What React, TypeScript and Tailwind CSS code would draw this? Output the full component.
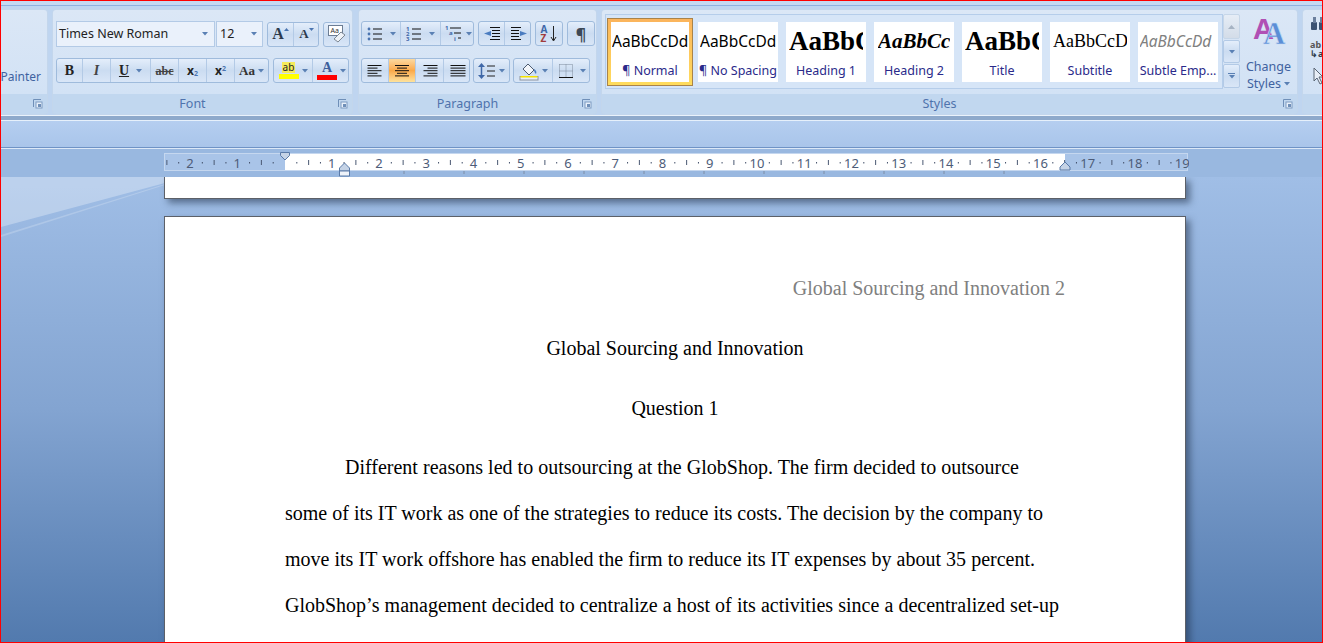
import type { ReactNode } from "react";

const ui = "font-['Noto_Sans',sans-serif]";
const serif = "font-['Liberation_Serif',serif]";
const btnBg = "bg-gradient-to-b from-[#e4eefb] via-[#cbdcf1] to-[#d9e6f7]";

function Caret({ color = "#5a80b4" }: { color?: string }) {
  return (
    <svg width="6" height="4" viewBox="0 0 6 4" className="shrink-0">
      <path d="M0 0h6L3 3.5z" fill={color} />
    </svg>
  );
}

function Launcher() {
  return (
    <svg width="10" height="10" viewBox="0 0 10 10" className="absolute right-[4px] bottom-[5px]">
      <path d="M.5 8V.5H8" fill="none" stroke="#6f8fb8" />
      <rect x="3" y="3" width="6" height="6" fill="#e8f0fa" stroke="#7f9cc2" />
      <rect x="5" y="5" width="3" height="3" fill="#6f8fb8" />
    </svg>
  );
}

function Group({ width, label, launcher = true, children }: { width?: string; label?: string; launcher?: boolean; children: ReactNode }) {
  return (
    <div className={`relative flex h-[106px] shrink-0 flex-col overflow-hidden rounded-[4px] border border-[#c3d6ec] ${width}`}>
      <div className="h-[84px] shrink-0 bg-gradient-to-b from-[#dbe7f6] to-[#d2e2f5]">{children}</div>
      <div className={`flex h-[20px] shrink-0 items-center justify-center bg-[#c1d7ef] pt-[1px] pr-[20px] text-[12.5px] text-[#4f73ad] ${ui}`}>{label}</div>
      {launcher ? <Launcher /> : null}
    </div>
  );
}

function Bar({ children, className = "" }: { children: ReactNode; className?: string }) {
  return (
    <div className={`flex h-[25px] shrink-0 divide-x divide-[#b3cae6] overflow-hidden rounded-[3px] border border-[#9fbbdc] ${btnBg} ${className}`}>
      {children}
    </div>
  );
}

function Seg({ w, active, children }: { w: string; active?: boolean; children: ReactNode }) {
  return (
    <div
      className={`flex h-full shrink-0 items-center justify-center gap-[3px] ${w} ${
        active ? "bg-gradient-to-b from-[#fbd9a0] via-[#fba948] to-[#fde29c]" : ""
      }`}
    >
      {children}
    </div>
  );
}

function Lines({ kind }: { kind: "left" | "center" | "right" | "justify" }) {
  const rows = [14, 10, 14, 10, 14];
  return (
    <svg width="16" height="14" viewBox="0 0 16 14">
      {rows.map((n, i) => {
        const len = kind === "justify" ? 15 : n;
        const x = kind === "left" || kind === "justify" ? 0.5 : kind === "right" ? 15.5 - len : 8 - len / 2;
        return <path key={i} d={`M${x} ${1.5 + i * 2.6}h${len}`} stroke="#111" strokeWidth="1" />;
      })}
    </svg>
  );
}

function Bullets() {
  return (
    <svg width="16" height="14" viewBox="0 0 16 14">
      {[2, 7, 12].map((y) => (
        <g key={y}>
          <circle cx="2" cy={y} r="1.4" fill="#4a74b0" />
          <path d={`M6 ${y}h9`} stroke="#111" />
        </g>
      ))}
    </svg>
  );
}

function Numbered() {
  return (
    <svg width="16" height="14" viewBox="0 0 16 14">
      {[2, 7, 12].map((y, i) => (
        <g key={y}>
          <text x="0" y={y + 2} fontSize="6" fontWeight="700" fill="#3f68a8" fontFamily="Noto Sans, sans-serif">{i + 1}</text>
          <path d={`M6 ${y}h9`} stroke="#111" />
        </g>
      ))}
    </svg>
  );
}

function Multi() {
  return (
    <svg width="18" height="17" viewBox="0 0 18 17">
      <text x="0" y="5" fontSize="6" fontWeight="700" fill="#3f68a8" fontFamily="Noto Sans, sans-serif">1</text>
      <path d="M5 3h11" stroke="#111" />
      <text x="4" y="10" fontSize="6" fontWeight="700" fill="#3f68a8" fontFamily="Noto Sans, sans-serif">a</text>
      <path d="M9 8h7" stroke="#111" />
      <text x="9" y="16" fontSize="6" fontWeight="700" fill="#3f68a8" fontFamily="Noto Sans, sans-serif">i</text>
      <path d="M13 13h3" stroke="#111" />
    </svg>
  );
}

function Indent({ flip }: { flip?: boolean }) {
  return (
    <svg width="18" height="16" viewBox="0 0 18 16" className={flip ? "-scale-x-100" : ""}>
      <path d="M7 1.5h10M9 4.5h8M9 7.5h8M9 10.5h8M7 13.5h10" stroke="#111" />
      <path d="M8 5v5L1 7.5z" fill="#4a7cc0" />
    </svg>
  );
}

function LineSpacing() {
  return (
    <svg width="18" height="16" viewBox="0 0 18 16">
      <path d="M3.5 3v10" stroke="#3f68a8" strokeWidth="1.5" />
      <path d="M3.5 0L7 4H0zM3.5 16L7 12H0z" fill="#3f68a8" />
      <path d="M9 3h8M9 8h8M9 13h8" stroke="#222" />
    </svg>
  );
}

function Bucket() {
  return (
    <svg width="20" height="20" viewBox="0 0 20 20">
      <path d="M4 8l5-5 6 6-5 5z" fill="#f3f6fb" stroke="#4d5b70" />
      <path d="M15 8c2 1 3 3 2 5-1-1-2-2-2-5z" fill="#4a7cc0" />
      <rect x="1" y="15.5" width="18" height="3.5" fill="#e8eef6" stroke="#8d949e" />
      <rect x="1.5" y="15" width="17" height="1.5" fill="#f5e300" />
    </svg>
  );
}

function Borders() {
  return (
    <svg width="14" height="14" viewBox="0 0 14 14">
      <path d="M.5.5h13v13M.5.5v13M7 .5v13M.5 7h13" stroke="#7d8a9c" strokeDasharray="1 1" fill="none" />
      <path d="M0 13.5h14" stroke="#111" />
    </svg>
  );
}

function Clear() {
  return (
    <svg width="20" height="20" viewBox="0 0 20 20">
      <rect x="1.5" y="1.5" width="14" height="10" fill="#fff" stroke="#6c7d94" />
      <text x="3.5" y="9" fontSize="7" fill="#333" fontFamily="Noto Sans, sans-serif">Aa</text>
      <path d="M7 15l7-7 4 3-7 7z" fill="#eef2f7" stroke="#7d8793" />
    </svg>
  );
}

const styleItems = [
  { name: "¶ Normal", cls: `text-[15.5px] text-black ${ui}`, w: "w-[76px]" },
  { name: "¶ No Spacing", cls: `text-[15.5px] text-black ${ui}`, w: "w-[76px]" },
  { name: "Heading 1", cls: `text-[27px] font-bold text-black ${serif}`, w: "w-[74px]" },
  { name: "Heading 2", cls: `text-[21px] font-bold italic text-black ${serif}`, w: "w-[72px]" },
  { name: "Title", cls: `text-[27px] font-bold text-black ${serif}`, w: "w-[74px]" },
  { name: "Subtitle", cls: `text-[18px] text-black ${serif}`, w: "w-[74px]" },
  { name: "Subtle Emp...", cls: `text-[15.5px] italic text-[#808080] ${ui}`, w: "w-[76px]" },
];

function StyleCard({ item, first }: { item: (typeof styleItems)[number]; first: boolean }) {
  return (
    <div className={first ? "-my-[4px] -mr-[3px] shrink-0 border border-[#a9834a] bg-gradient-to-b from-[#fbb45c] to-[#ffdc5c] p-[3px]" : "shrink-0"}>
      <div className={`flex h-[60px] flex-col items-center bg-white ${first ? "w-[78px]" : "w-[80px]"}`}>
        <div className={`flex h-[40px] items-center overflow-hidden whitespace-nowrap ${item.w} ${item.cls}`}>AaBbCcDd</div>
        <div className={`text-[12.5px] leading-[18px] whitespace-nowrap text-[#2a2a8a] ${ui}`}>{item.name}</div>
      </div>
    </div>
  );
}

function ChangeStylesIcon() {
  return (
    <svg width="34" height="32" viewBox="0 0 34 32">
      <text x="1" y="25" fontSize="29" fontWeight="700" fill="#b04fb4" fontFamily="Liberation Sans, sans-serif">A</text>
      <text x="11" y="30" fontSize="31" fontWeight="700" fill="#5b8ed6" stroke="#c8dcf4" strokeWidth="0.6" fontFamily="Liberation Serif, serif">A</text>
    </svg>
  );
}

function Ruler() {
  const z = 121; // ruler zero, relative to the svg
  const unit = 47.25;
  const ticks = [];
  const numbers = [];
  for (let n = -3; n <= 18; n++) {
    const x = z + n * unit;
    ticks.push(<path key={`a${n}`} d={`M${x + unit / 4} 13v1.5`} stroke="#3f4c66" />);
    ticks.push(<path key={`b${n}`} d={`M${x + unit / 2} 11v5`} stroke="#4a5872" />);
    ticks.push(<path key={`c${n}`} d={`M${x + (unit * 3) / 4} 13v1.5`} stroke="#3f4c66" />);
  }
  for (let n = -2; n <= 19; n++) {
    if (n === 0) continue;
    numbers.push(
      <text key={n} x={z + n * unit - 0.5} y="18.5" textAnchor="middle" fontSize="13" fill="#4d5c78" fontFamily="Noto Sans, sans-serif">
        {Math.abs(n)}
      </text>,
    );
  }
  const tabs = [];
  for (let i = 1; i <= 11; i++) {
    tabs.push(<path key={i} d={`M${180 + i * 60} 22v3`} stroke="#7c8da6" />);
  }
  return (
    <svg width="1025" height="28" viewBox="0 0 1025 28" className="block">
      <defs>
        <clipPath id="rul">
          <rect x="1" y="5" width="1023" height="16" />
        </clipPath>
      </defs>
      <rect x=".5" y="4.5" width="1023" height="17" fill="#a9c4e8" stroke="#c5d7ef" />
      <rect x="121" y="5" width="780" height="16" fill="#fff" />
      <g clipPath="url(#rul)">{ticks}</g>
      {numbers}
      {tabs}
      <path d="M116.5 3.5h9v3l-4.5 4.5-4.5-4.5z" fill="#c5d3e6" stroke="#5a7aa8" />
      <path d="M175.5 22v-3l5-5 5 5v3z" fill="#c5d3e6" stroke="#5a7aa8" />
      <path d="M175.5 22h10v5h-10z" fill="#eef3fa" stroke="#5a7aa8" />
      <path d="M896 21v-3l5-5 5 5v3z" fill="#c5d3e6" stroke="#5a7aa8" />
    </svg>
  );
}

const bodyLines = [
  { w: "ml-[60px] w-[674px]", t: "Different reasons led to outsourcing at the GlobShop.  The firm decided to outsource" },
  { w: "w-[758px]", t: "some of its IT work as one of the strategies to reduce its costs. The decision by the company to" },
  { w: "w-[750px]", t: "move its IT work offshore has enabled the firm to reduce its IT expenses by about 35 percent." },
  { w: "w-[774px]", t: "GlobShop’s management decided to centralize a host of its activities since a decentralized set-up" },
];

export default function App() {
  return (
    <div className="flex h-[643px] w-[1323px] flex-col overflow-hidden border border-[#ff0000] bg-[#bfd5f0]">
      {/* ribbon */}
      <div className="h-[5px] shrink-0 border-b border-[#8fb1e0] bg-[#c5d9f2]" />
      <div className="flex h-[109px] shrink-0 gap-[4px] bg-[#bfd5f0] pt-[3px]">
        <Group width="w-[47px] rounded-l-none border-l-0" label="">
          <div className={`flex h-full items-end justify-end pr-[6px] pb-[7px] text-[12px] leading-[20px] text-[#3f62a0] ${ui}`}>Painter</div>
        </Group>

        <Group width="w-[301px]" label="Font">
          <div className="flex flex-col gap-[11px] pt-[11px] pl-[3px]">
            <div className="flex h-[26px] items-center">
              <div className={`flex h-[26px] w-[159px] items-center justify-between border border-[#b3cae6] bg-[#eaf1fb] pr-[6px] pl-[2px] text-[12.5px] text-[#222] ${ui}`}>
                Times New Roman <Caret />
              </div>
              <div className={`ml-[1px] flex h-[26px] w-[47px] items-center justify-between border border-[#b3cae6] bg-[#eaf1fb] pr-[5px] pl-[3px] text-[12.5px] text-[#222] ${ui}`}>
                12 <Caret />
              </div>
              <Bar className="ml-[4px] w-[52px]">
                <Seg w="w-[26px]">
                  <span className={`text-[16px] font-bold text-[#2c3a4d] ${serif}`}>A</span>
                  <svg width="5" height="3" viewBox="0 0 5 3" className="-mt-[10px] -ml-[3px]"><path d="M0 3h5L2.5 0z" fill="#4a74b0" /></svg>
                </Seg>
                <Seg w="w-[25px]">
                  <span className={`text-[13px] font-bold text-[#2c3a4d] ${serif}`}>A</span>
                  <svg width="5" height="3" viewBox="0 0 5 3" className="-mt-[10px] -ml-[3px]"><path d="M0 0h5L2.5 3z" fill="#4a74b0" /></svg>
                </Seg>
              </Bar>
              <Bar className="ml-[4px] w-[27px]">
                <Seg w="w-full">
                  <Clear />
                </Seg>
              </Bar>
            </div>
            <div className="flex items-center">
              <Bar className="w-[213px]">
                <Seg w="w-[26px]"><span className={`text-[14px] font-bold text-[#222] ${serif}`}>B</span></Seg>
                <Seg w="w-[28px]"><span className={`text-[14px] font-bold italic text-[#444] ${serif}`}>I</span></Seg>
                <Seg w="w-[40px]">
                  <span className={`text-[14px] font-bold text-[#222] underline ${serif}`}>U</span>
                  <span className="ml-[4px]"><Caret /></span>
                </Seg>
                <Seg w="w-[28px]"><span className={`text-[12px] font-bold text-[#444] line-through ${serif}`}>abc</span></Seg>
                <Seg w="w-[28px]"><span className={`text-[12px] font-bold text-[#222] ${ui}`}>x<sub className="text-[7px] text-[#4a74b0]">2</sub></span></Seg>
                <Seg w="w-[28px]"><span className={`text-[12px] font-bold text-[#222] ${ui}`}>x<sup className="text-[7px] text-[#4a74b0]">2</sup></span></Seg>
                <Seg w="w-[33px]">
                  <span className={`text-[13px] font-bold text-[#333] ${serif}`}>Aa</span>
                  <Caret />
                </Seg>
              </Bar>
              <Bar className="ml-[4px] w-[76px]">
                <Seg w="w-[39px]">
                  <span className="flex flex-col items-center">
                    <span className={`bg-[#f6ec5a] px-[1px] text-[10px] leading-[11px] text-[#222] ${ui}`}>ab</span>
                    <span className="mt-[1px] h-[5px] w-[20px] bg-[#ffff00]" />
                  </span>
                  <Caret />
                </Seg>
                <Seg w="w-[37px]">
                  <span className="flex flex-col items-center">
                    <span className={`text-[14px] leading-[14px] font-bold text-[#3d5f9c] ${serif}`}>A</span>
                    <span className="h-[5px] w-[20px] bg-[#ff0000]" />
                  </span>
                  <Caret />
                </Seg>
              </Bar>
            </div>
          </div>
        </Group>

        <Group width="w-[239px] ml-[1px]" label="Paragraph">
          <div className="flex flex-col gap-[12px] pt-[11px] pl-[2px]">
            <div className="flex gap-[4px]">
              <Bar className="w-[113px]">
                <Seg w="w-[39px]"><Bullets /><span className="ml-[4px]"><Caret /></span></Seg>
                <Seg w="w-[40px]"><Numbered /><span className="ml-[4px]"><Caret /></span></Seg>
                <Seg w="w-[34px]"><Multi /><Caret /></Seg>
              </Bar>
              <Bar className="w-[53px]">
                <Seg w="w-[26px]"><Indent /></Seg>
                <Seg w="w-[27px]"><Indent flip /></Seg>
              </Bar>
              <Bar className="w-[28px]">
                <Seg w="w-full">
                  <span className={`flex flex-col text-[10px] leading-[9px] font-bold ${ui}`}>
                    <span className="text-[#3f68a8]">A</span>
                    <span className="text-[#a03b3b]">Z</span>
                  </span>
                  <svg width="7" height="16" viewBox="0 0 7 16"><path d="M3.5 0v14M1 11l2.5 4L6 11" fill="none" stroke="#222" /></svg>
                </Seg>
              </Bar>
              <Bar className="w-[28px]">
                <Seg w="w-full"><span className={`text-[16px] font-bold text-[#3d4856] ${ui}`}>¶</span></Seg>
              </Bar>
            </div>
            <div className="flex gap-[3px]">
              <Bar className="w-[109px]">
                <Seg w="w-[27px]"><Lines kind="left" /></Seg>
                <Seg w="w-[27px]" active><Lines kind="center" /></Seg>
                <Seg w="w-[28px]"><Lines kind="right" /></Seg>
                <Seg w="w-[27px]"><Lines kind="justify" /></Seg>
              </Bar>
              <Bar className="w-[37px]">
                <Seg w="w-full"><LineSpacing /><Caret /></Seg>
              </Bar>
              <Bar className="w-[77px]">
                <Seg w="w-[39px]"><Bucket /><Caret /></Seg>
                <Seg w="w-[38px]"><Borders /><span className="ml-[4px]"><Caret /></span></Seg>
              </Bar>
            </div>
          </div>
        </Group>

        <Group width="w-[697px]" label="Styles">
          <div className="flex h-full pt-[4px] pl-[3px]">
            <div className="flex h-[75px] w-[618px] shrink-0 items-center gap-[8px] border border-[#b5cdea] bg-[#d6e5f7] pl-[1px]">
              {styleItems.map((item, i) => (
                <StyleCard key={item.name} item={item} first={i === 0} />
              ))}
            </div>
            <div className="flex h-[75px] w-[17px] shrink-0 flex-col gap-[1px]">
              <div className="flex h-[25px] items-center justify-center rounded-[2px] border border-[#c6d6e8] bg-gradient-to-b from-[#e6edf6] to-[#d3dce8]">
                <svg width="7" height="4" viewBox="0 0 7 4"><path d="M0 4h7L3.5 0z" fill="#a6b3c3" /></svg>
              </div>
              <div className={`flex h-[23px] items-center justify-center rounded-[2px] border border-[#b3cae6] ${btnBg}`}>
                <Caret />
              </div>
              <div className={`flex h-[24px] flex-col items-center justify-center gap-[1px] rounded-[2px] border border-[#b3cae6] ${btnBg}`}>
                <span className="h-[1px] w-[7px] bg-[#5a80b4]" />
                <Caret />
              </div>
            </div>
            <div className={`flex flex-1 flex-col items-center text-[12.5px] leading-[17px] text-[#3f62a0] ${ui}`}>
              <ChangeStylesIcon />
              <div className="mt-[12px]">Change</div>
              <div className="flex items-center gap-[3px]">Styles <Caret /></div>
            </div>
          </div>
        </Group>

        <Group width="flex-1 rounded-r-none border-r-0" label="" launcher={false}>
          <div className="flex flex-col items-start gap-[9px] pt-[7px] pl-[7px]">
            <svg width="20" height="14" viewBox="0 0 20 14">
              <rect x="1" y="5" width="6" height="8" rx="1" fill="#3c5272" />
              <rect x="9" y="5" width="6" height="8" rx="1" fill="#3c5272" />
              <rect x="3" y="0" width="3" height="6" fill="#6b7f9d" />
              <rect x="10" y="0" width="3" height="6" fill="#6b7f9d" />
            </svg>
            <div className={`text-[9px] leading-[9px] font-bold text-[#555] ${ui}`}>ab<br /><span className="text-[#2c3a4d]">↳a</span></div>
            <svg width="14" height="18" viewBox="0 0 14 18" className="ml-[3px]"><path d="M1 1v13l3-3 3 6 2-1-3-6h4z" fill="#e8eef6" stroke="#5b6675" /></svg>
          </div>
        </Group>
      </div>

      {/* strip under the ribbon */}
      <div className="h-[5px] shrink-0 border-t border-[#eaf2fb] bg-[#8ea9cb]" />
      <div className="h-[1px] shrink-0 bg-[#e6f0fb]" />
      <div className="h-[26px] shrink-0 bg-gradient-to-b from-[#b5cef0] to-[#a9c5ea]" />
      <div className="h-[1px] shrink-0 bg-[#6f93c5]" />
      <div className="h-[1px] shrink-0 bg-[#dce8f7]" />

      {/* ruler row */}
      <div className="h-[28px] shrink-0 bg-[#99b8e0] pl-[163px]">
        <Ruler />
      </div>

      {/* document area */}
      <div className="relative min-h-0 flex-1 overflow-hidden bg-gradient-to-b from-[#a0bee6] via-[#83a4d1] to-[#527aae] pl-[163px]">
        <svg width="164" height="70" viewBox="0 0 164 70" className="absolute top-0 left-0">
          <path d="M0 0h164v6L0 50z" fill="#ffffff" fillOpacity="0.3" />
          <path d="M0 58L164 7v1L0 60z" fill="#ffffff" fillOpacity="0.2" />
        </svg>
        <div className="relative h-[22px] w-[1022px] border-x border-b border-[#5c6068] bg-white shadow-[4px_4px_7px_rgba(30,45,70,0.55)]" />
        <div className={`relative mt-[17px] h-[500px] w-[1022px] border border-[#5c6068] bg-white pt-[56px] pl-[120px] text-[20px] text-black shadow-[4px_4px_7px_rgba(30,45,70,0.55)] ${serif}`}>
          <div className="h-[30px] w-[780px] text-right leading-[30px] text-[#808080]">Global Sourcing and Innovation 2</div>
          <div className="mt-[30px] h-[30px] w-[780px] text-center leading-[30px]">Global Sourcing and Innovation</div>
          <div className="mt-[30px] h-[30px] w-[780px] text-center leading-[30px]">Question 1</div>
          <div className="mt-[21px]">
            {bodyLines.map((l) => (
              <div key={l.t} className={`h-[46px] leading-[46px] whitespace-nowrap [text-align-last:justify] ${l.w}`}>
                {l.t}
              </div>
            ))}
          </div>
        </div>
      </div>
    </div>
  );
}
